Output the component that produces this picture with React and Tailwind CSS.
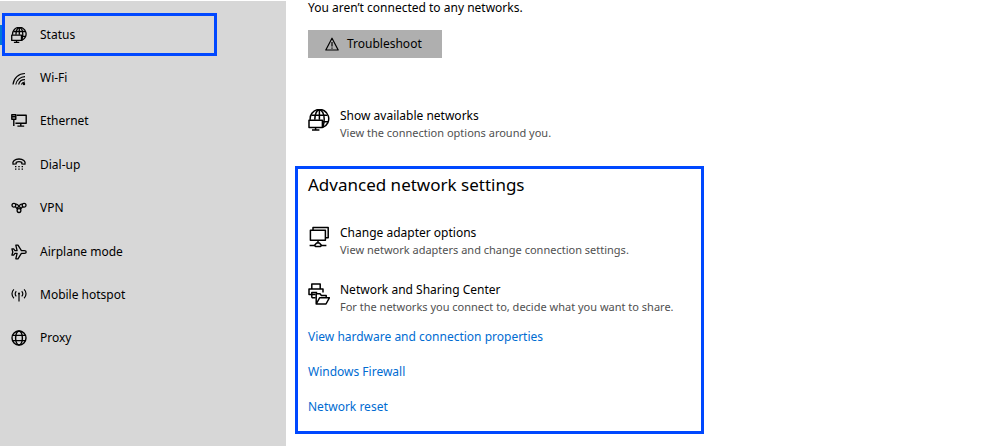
import React from "react";

function Icon({ size = "size-4", stroke = 1.3, box = 16, children }) {
  return (
    <svg
      className={`${size} shrink-0`}
      viewBox={`0 0 ${box} ${box}`}
      fill="none"
      stroke="currentColor"
      strokeWidth={stroke}
      strokeLinejoin="round"
      aria-hidden="true"
    >
      {children}
    </svg>
  );
}

function GlobeMonitor({ size, stroke }) {
  return (
    <Icon size={size} stroke={stroke} box={22}>
      <path d="M2.2 10.8A9.3 9.3 0 1 1 14.8 18.4" />
      <path d="M6.8 10.8C6.8 5.4 8.6 1 11.4 1s4.8 4 4.8 9-.6 6-1.4 8" />
      <path d="M3.4 6.2h16M11.4 1v9.8M14.2 12.8h6" />
      <path d="M1 11.2h13.4v7.2H1zM7.6 18.4V21M4 21.1h7.4" />
    </Icon>
  );
}

function Wifi() {
  return (
    <Icon stroke={1.2}>
      <path d="M2 14.5A12 12 0 0 1 14 3.5M4.8 14.5A9.5 9.5 0 0 1 14 6.6M7.6 14.5A6.5 6.5 0 0 1 14 9.6M10.4 14.5A4 4 0 0 1 14 12" />
      <circle cx="13" cy="14" r="1.2" fill="currentColor" stroke="none" />
    </Icon>
  );
}

function Ethernet() {
  return (
    <Icon stroke={1.4}>
      <path d="M5.6 2.3h9.6v8H4.4M9.8 10.3v3M6.4 13.1h6.8" />
      <path d="M.8 1.8h4v4.4h-4zM2.8 6.2V13M.8 3.8h4" />
    </Icon>
  );
}

function DialUp() {
  return (
    <Icon stroke={1.3}>
      <path d="M2 7.2C1 4.4 4 2 8 2s7 2.4 6 5.2l-3.2-.4V5.3c-1.6-.7-4-.7-5.6 0v1.5z" />
      <path d="M4 9.6h1.4M7.3 9.6h1.4M10.6 9.6H12M4 12.2h1.4M7.3 12.2h1.4M10.6 12.2H12" />
    </Icon>
  );
}

function Vpn() {
  return (
    <Icon stroke={1.3}>
      <circle cx="2.9" cy="5.2" r="1.9" />
      <circle cx="13.1" cy="5.2" r="1.9" />
      <circle cx="8" cy="10.6" r="1.9" />
      <path d="M4.3 6.6 6.6 9.2M4.7 4.2c1.4-.6 2 .4 2.8 1.4L9.6 8M11.4 4.4c-1.4-.8-2.2 0-2.8.9L6.4 8M11.7 6.6 9.4 9.2" />
    </Icon>
  );
}

function Airplane() {
  return (
    <Icon stroke={1.3}>
      <path d="M15.2 8c0-.8-.8-1.3-1.8-1.3H10.4L7 1.2H4.8l1.3 5.5H4L2.6 4.8H.9L1.8 8l-.9 3.2h1.7L4 9.3h2.1l-1.3 5.5H7l3.4-5.5h3c1 0 1.8-.5 1.8-1.3z" />
    </Icon>
  );
}

function Hotspot() {
  return (
    <Icon stroke={1.2}>
      <path d="M8 6v8.6M5.3 9.4a3.6 3.6 0 0 1 0-5.2M10.7 9.4a3.6 3.6 0 0 0 0-5.2M2.9 11.2a6 6 0 0 1 0-8.8M13.1 11.2a6 6 0 0 0 0-8.8" />
      <circle cx="8" cy="6.4" r="1" fill="currentColor" stroke="none" />
    </Icon>
  );
}

function Globe() {
  return (
    <Icon stroke={1.4}>
      <circle cx="8" cy="8" r="7" />
      <ellipse cx="8" cy="8" rx="3.4" ry="7" />
      <path d="M1.8 5.4h12.4M1.8 10.6h12.4" />
    </Icon>
  );
}

function Warning() {
  return (
    <Icon size="size-3.5" stroke={1.2} box={14}>
      <path d="M7 1.2 13.2 13H.8zM7 5v4.4M7 10.4v1.3" />
    </Icon>
  );
}

function Adapter() {
  return (
    <Icon size="size-[22px]" stroke={1.5} box={22}>
      <path d="M5 4V1.4h15.2v10.4h-2.4" />
      <path d="M2.4 4.2h15v10h-15zM10 14.2V17M1.6 19.4h5M13.4 19.4h5" />
      <path d="M6.4 19.4 8.6 17h2.8l2.2 2.4-1.2 1H7.6z" />
    </Icon>
  );
}

function PrinterFolder() {
  return (
    <Icon size="size-[22px]" stroke={1.5} box={22}>
      <path d="M3.8 6V1h8.4v5M7.6 11.6H1V6h14v3.4M3.8 14.8V9.4h5.4M3.8 14.8h3.8" />
      <path d="M8.2 21V10.8H12l1.4 1.6h4.8v2.4M8.2 21l3.4-6.2h9.8L18 21z" />
    </Icon>
  );
}

const navItems = [
  { label: "Status", icon: <GlobeMonitor size="size-4" stroke={1.8} />, active: true },
  { label: "Wi-Fi", icon: <Wifi /> },
  { label: "Ethernet", icon: <Ethernet /> },
  { label: "Dial-up", icon: <DialUp /> },
  { label: "VPN", icon: <Vpn /> },
  { label: "Airplane mode", icon: <Airplane /> },
  { label: "Mobile hotspot", icon: <Hotspot /> },
  { label: "Proxy", icon: <Globe /> },
];

function NavItem({ label, icon, active }) {
  return (
    <li className="flex">
      {active && <span className="-mr-0.5 h-5 w-0.5 shrink-0 self-center bg-[#0078d7]" />}
      <a
        href="#"
        aria-current={active ? "page" : undefined}
        className={`ml-0.5 flex w-[215px] items-center gap-[13px] ${
          active ? "border-3 border-[#0048ff] px-1.5" : "px-[9px]"
        }`}
      >
        {icon}
        {label}
      </a>
    </li>
  );
}

function Setting({ icon, title, text }) {
  return (
    <a href="#" className="flex items-start gap-2.5">
      <span className="pt-0.5">{icon}</span>
      <span className="flex flex-col">
        <span className="text-xs leading-[17px] text-black">{title}</span>
        <span className="text-[11px] leading-[17px] text-[#505050]">{text}</span>
      </span>
    </a>
  );
}

const links = ["View hardware and connection properties", "Windows Firewall", "Network reset"];

export default function App() {
  return (
    <div className="flex min-h-screen bg-white pt-px font-['Noto_Sans','Open_Sans',sans-serif] text-xs text-black">
      <nav className="w-[286px] shrink-0 bg-[#d7d7d7] pt-3">
        <ul className="grid h-[347px] grid-rows-8">
          {navItems.map((item) => (
            <NavItem key={item.label} {...item} />
          ))}
        </ul>
      </nav>
      <main className="flex min-w-0 flex-1 flex-col items-start pl-[9px]">
        <div className="flex flex-col items-start px-[13px]">
          <p className="leading-[14px]">You aren’t connected to any networks.</p>
          <button
            type="button"
            className="mt-[15px] mb-[49px] flex h-7 items-center gap-2 bg-[#afafaf] pr-5 pl-[17px]"
          >
            <Warning />
            Troubleshoot
          </button>
          <Setting
            icon={<GlobeMonitor size="size-[22px]" stroke={1.5} />}
            title="Show available networks"
            text="View the connection options around you."
          />
        </div>
        <section className="mt-[25px] flex w-full max-w-[409px] flex-col items-start border-3 border-[#0048ff] px-2.5 pt-0.5 pb-[15px]">
          <h2 className="mb-[25px] text-[17px] leading-7">Advanced network settings</h2>
          <div className="flex flex-col gap-[23px]">
            <Setting
              icon={<Adapter />}
              title="Change adapter options"
              text="View network adapters and change connection settings."
            />
            <Setting
              icon={<PrinterFolder />}
              title="Network and Sharing Center"
              text="For the networks you connect to, decide what you want to share."
            />
          </div>
          <div className="mt-[13px] flex flex-col items-start gap-[17px] text-[#006cd2]">
            {links.map((link) => (
              <a key={link} href="#" className="leading-[18px]">
                {link}
              </a>
            ))}
          </div>
        </section>
      </main>
    </div>
  );
}
